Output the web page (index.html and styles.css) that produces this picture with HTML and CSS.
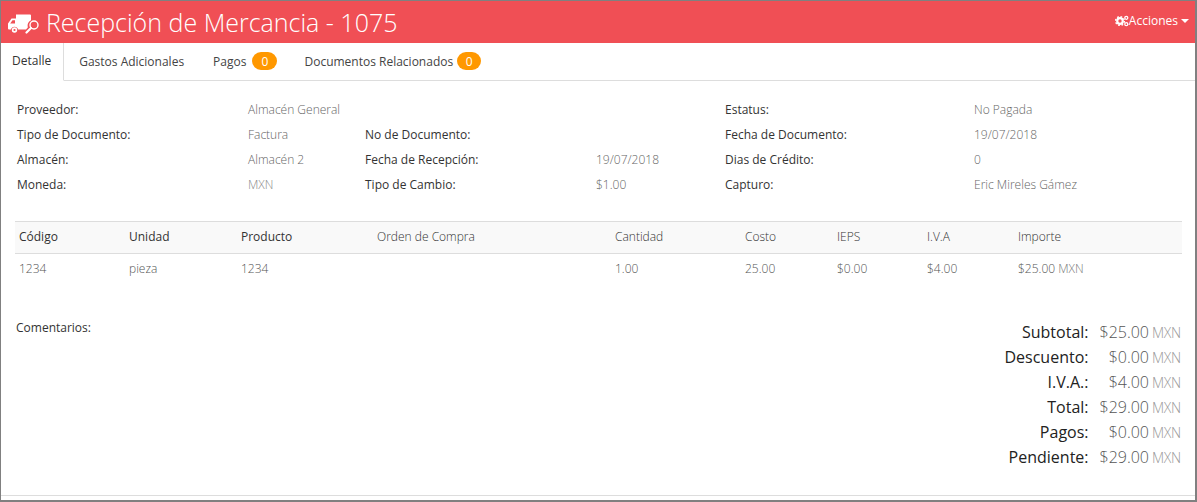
FILE: index.html
```html
<!DOCTYPE html>
<html lang="es">
<head>
<meta charset="utf-8">
<title>Recepción de Mercancia - 1075</title>
<link rel="stylesheet" href="styles.css">
</head>
<body>
<div class="frame">
  <header class="top">
    <h1 class="title">
      <svg class="truck" viewBox="0 0 31 20" aria-hidden="true">
        <path fill="#fff" fill-rule="evenodd" d="M8 0.500h14a1 1 0 0 1 1 1v4.700a6 6 0 0 0-3.200 7.300L18 15.500H10a3.600 3.600 0 0 0-7 0H1a1 1 0 0 1-1-1V9.500L3.500 4.500H8zM2.200 9.500H7V6.200H4.500z"/>
        <circle cx="6.500" cy="16" r="2.700" fill="#fff"/>
        <circle cx="6.500" cy="16" r="1.100" fill="#f04f55"/>
        <circle cx="26" cy="11" r="4" fill="none" stroke="#fff" stroke-width="1.400"/>
        <path d="M23 14l-4.500 4.500" stroke="#fff" stroke-width="2.200" stroke-linecap="round"/>
      </svg>
      <span>Recepción de Mercancia - 1075</span>
    </h1>
    <div class="actions">
      <svg class="gears" viewBox="0 0 14 12" aria-hidden="true">
        <circle cx="5" cy="6" r="2.800" fill="none" stroke="#fff" stroke-width="2.200"/>
        <circle cx="5" cy="6" r="4.400" fill="none" stroke="#fff" stroke-width="1.400" stroke-dasharray="1.700 1.750"/>
        <circle cx="11.300" cy="2.800" r="1.500" fill="none" stroke="#fff" stroke-width="1.300"/>
        <circle cx="11.300" cy="9.200" r="1.500" fill="none" stroke="#fff" stroke-width="1.300"/>
      </svg>
      <span>Acciones</span>
      <i class="caret"></i>
    </div>
  </header>

  <nav class="tabs">
    <a class="tab active">Detalle</a>
    <a class="tab">Gastos Adicionales</a>
    <a class="tab pagos"><span>Pagos</span><b class="badge">0</b></a>
    <a class="tab docs"><span>Documentos Relacionados</span><b class="badge">0</b></a>
  </nav>

  <main class="content">
    <section class="info">
      <span class="lbl">Proveedor:</span><span class="val">Almacén General</span><span></span><span></span><span class="lbl">Estatus:</span><span class="val">No Pagada</span>
      <span class="lbl">Tipo de Documento:</span><span class="val">Factura</span><span class="lbl">No de Documento:</span><span></span><span class="lbl">Fecha de Documento:</span><span class="val">19/07/2018</span>
      <span class="lbl">Almacén:</span><span class="val">Almacén 2</span><span class="lbl">Fecha de Recepción:</span><span class="val">19/07/2018</span><span class="lbl">Dias de Crédito:</span><span class="val">0</span>
      <span class="lbl">Moneda:</span><span class="val faint">MXN</span><span class="lbl">Tipo de Cambio:</span><span class="val">$1.00</span><span class="lbl">Capturo:</span><span class="val">Eric Mireles Gámez</span>
    </section>

    <section class="table">
      <div class="row head">
        <span>Código</span><span>Unidad</span><span>Producto</span><span class="thin">Orden de Compra</span><span class="thin">Cantidad</span><span class="thin">Costo</span><span class="thin">IEPS</span><span class="thin">I.V.A</span><span class="thin">Importe</span>
      </div>
      <div class="row body">
        <span>1234</span><span>pieza</span><span>1234</span><span></span><span>1.00</span><span>25.00</span><span>$0.00</span><span>$4.00</span><span>$25.00 <em>MXN</em></span>
      </div>
    </section>

    <section class="bottom">
      <div class="comments">Comentarios:</div>
      <dl class="totals">
        <dt>Subtotal:</dt><dd>$25.00</dd><dd class="cur">MXN</dd>
        <dt>Descuento:</dt><dd>$0.00</dd><dd class="cur">MXN</dd>
        <dt>I.V.A.:</dt><dd>$4.00</dd><dd class="cur">MXN</dd>
        <dt>Total:</dt><dd>$29.00</dd><dd class="cur">MXN</dd>
        <dt>Pagos:</dt><dd>$0.00</dd><dd class="cur">MXN</dd>
        <dt>Pendiente:</dt><dd>$29.00</dd><dd class="cur">MXN</dd>
      </dl>
    </section>
  </main>
</div>
</body>
</html>
```
FILE: styles.css
```css
* { box-sizing: border-box; }
html, body { margin: 0; padding: 0; }
body {
  width: 1197px;
  height: 502px;
  overflow: hidden;
  background: #fff;
  font-family: "Open Sans", "Liberation Sans", sans-serif;
  font-size: 12px;
  color: #444;
}
.frame {
  height: 502px;
  border: 1px solid #808080;
  border-width: 1px 2px 2px 1px;
  display: flex;
  flex-direction: column;
}
.top {
  height: 42px;
  flex: none;
  background: #f04f55;
  color: #fff;
  display: flex;
  align-items: center;
  justify-content: space-between;
  padding: 0 6px 0 7px;
}
.title {
  margin: 0;
  font-size: 25px;
  font-weight: 300;
  line-height: 42px;
  display: flex;
  align-items: center;
  gap: 7px;
}
.truck { width: 31px; height: 20px; margin-top: 3px; }
.actions {
  display: flex;
  align-items: center;
  font-size: 12px;
  margin-top: -3px;
}
.gears { width: 14px; height: 12px; }
.caret {
  margin-left: 3px;
  border: 4px solid transparent;
  border-top-color: #fff;
  border-bottom-width: 0;
}
.tabs {
  height: 38px;
  flex: none;
  display: flex;
  border-bottom: 1px solid #ddd;
}
.tab {
  height: 38px;
  padding: 0 12px 2px 11px;
  display: flex;
  align-items: center;
  color: #444;
  white-space: nowrap;
}
.tab:nth-child(2) { padding-left: 15px; margin-right: 1px; }
.pagos { padding-left: 16px; gap: 6px; }
.docs { padding-left: 15px; gap: 4px; }
.docs .badge { min-width: 24px; }
.tab.active {
  background: #fff;
  border-right: 1px solid #ddd;
  border-bottom: 1px solid #fff;
  color: #333;
}
.badge {
  font-weight: 400;
  background: #ff9800;
  color: #fff;
  min-width: 25px;
  height: 18px;
  border-radius: 9px;
  display: inline-flex;
  align-items: center;
  justify-content: center;
}
.content {
  flex: 1;
  padding: 16px 14px 0 14px;
  border-bottom: 1px solid #ddd;
  margin-bottom: 4px;
  display: flex;
  flex-direction: column;
}
.info {
  display: grid;
  grid-template-columns: 231px 117px 231px 129px 249px 1fr;
  grid-auto-rows: 25px;
  padding-left: 2px;
  line-height: 25px;
}
.lbl { color: #333; }
.val { color: #666; font-weight: 300; }
.faint { color: #888; }
.table {
  margin-top: 24px;
  width: 1167px;
}
.row {
  display: grid;
  grid-template-columns: 110px 112px 136px 238px 130px 92px 90px 91px 1fr;
  padding-left: 4px;
}
.head {
  height: 33px;
  line-height: 30px;
  background: #f9f9f9;
  border-top: 1px solid #ddd;
  border-bottom: 1px solid #ddd;
  color: #333;
}
.head .thin { color: #333; font-weight: 300; }
.body {
  height: 31px;
  line-height: 30px;
  color: #555;
  font-weight: 300;
}
.body em { font-style: normal; color: #777; }
.bottom {
  display: flex;
  justify-content: space-between;
  margin-top: 33px;
}
.comments { padding-left: 1px; line-height: 20px; color: #333; }
.totals {
  margin: 2px 0 0 0;
  display: grid;
  grid-template-columns: auto auto 32px;
  grid-auto-rows: 25px;
  line-height: 25px;
  text-align: right;
  font-size: 16px;
}
.totals dt { color: #222; }
.totals dd { margin: 0 0 0 11px; color: #555; font-weight: 300; }
.totals dd.cur { margin-left: 0; font-size: 14px; color: #999; letter-spacing: -0.2px; }
```
